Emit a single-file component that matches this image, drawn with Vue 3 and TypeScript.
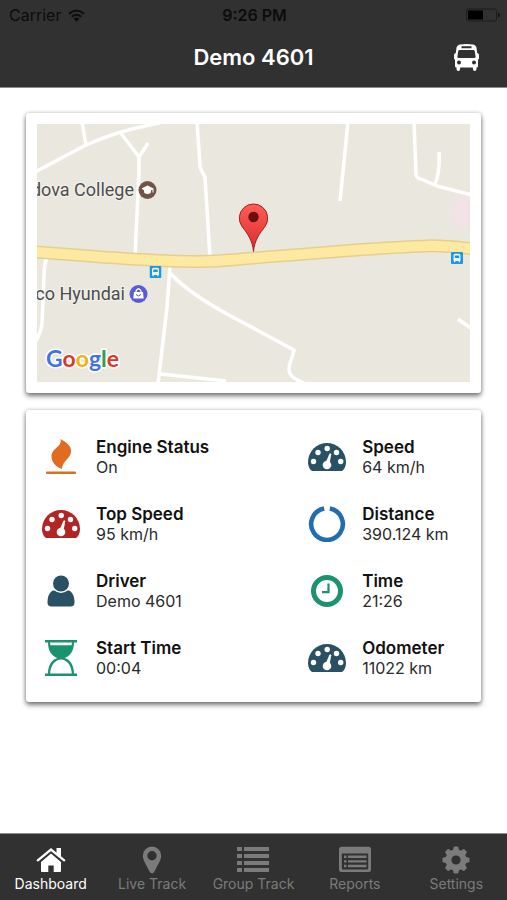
<script setup lang="ts">
interface Stat {
  label: string
  value: string
  icon: string
  tone: string
  width: number
  height: number
}

interface Tab {
  label: string
  icon: string
  href: string
  active: boolean
}

const stats: Stat[] = [
  { label: 'Engine Status', value: 'On', icon: 'flame', tone: 'orange', width: 30, height: 36 },
  { label: 'Speed', value: '64 km/h', icon: 'gauge', tone: 'slate', width: 38, height: 28 },
  { label: 'Top Speed', value: '95 km/h', icon: 'gauge', tone: 'red', width: 38, height: 28 },
  { label: 'Distance', value: '390.124 km', icon: 'ring', tone: 'blue', width: 38, height: 36 },
  { label: 'Driver', value: 'Demo 4601', icon: 'driver', tone: 'slate', width: 28, height: 32 },
  { label: 'Time', value: '21:26', icon: 'clock', tone: 'green', width: 32, height: 32 },
  { label: 'Start Time', value: '00:04', icon: 'hourglass', tone: 'green', width: 32, height: 36 },
  { label: 'Odometer', value: '11022 km', icon: 'gauge', tone: 'slate', width: 38, height: 28 },
]

const tabs: Tab[] = [
  { label: 'Dashboard', icon: 'home', href: '#dashboard', active: true },
  { label: 'Live Track', icon: 'place', href: '#live', active: false },
  { label: 'Group Track', icon: 'list', href: '#group', active: false },
  { label: 'Reports', icon: 'report', href: '#reports', active: false },
  { label: 'Settings', icon: 'gear', href: '#settings', active: false },
]

const teeth: number[] = [0, 45, 90, 135, 180, 225, 270, 315]
</script>

<template>
  <div class="screen">
    <svg class="sprite" aria-hidden="true">
      <symbol id="flame" viewBox="0 0 30 36">
        <path fill="currentColor" d="M14.500 0C20 3 25.800 7 25 13C24.300 20 16 22 16 30C9 27.500 5.500 22.500 5.500 17.500C5.500 9 16.500 8 14.500 0z" />
        <rect fill="currentColor" y="32.500" width="30" height="2.500" rx="1" />
      </symbol>
      <symbol id="gauge" viewBox="0 0 38 28">
        <path fill="currentColor" d="M4 28C1.500 26.500 0 22.500 0 19A19 19 0 0 1 38 19C38 22.500 36.500 26.500 34 28z" />
        <g fill="#fff">
          <circle cx="5.500" cy="18.500" r="2.700" />
          <circle cx="10" cy="9.500" r="2.700" />
          <circle cx="19.200" cy="5.500" r="2.700" />
          <circle cx="28.500" cy="9.500" r="2.700" />
          <circle cx="32.700" cy="18.500" r="2.700" />
          <circle cx="19" cy="22" r="4.300" />
          <path d="M17.500 20L21.300 11Q22.500 9.500 23.200 11.300L21.500 21z" />
        </g>
      </symbol>
      <symbol id="ring" viewBox="0 0 38 36">
        <path fill="none" stroke="currentColor" stroke-width="4.600" d="M21.800 2.600A15.800 15.800 0 1 1 16.200 2.600" />
      </symbol>
      <symbol id="driver" viewBox="0 0 28 32">
        <path fill="currentColor" d="M6 15.500H22C26 17.500 27.500 22 27.500 27.500Q27.500 31.500 23.500 31.500H4.500Q.5 31.500 .5 27.500C.5 22 2 17.500 6 15.500z" />
        <circle cx="14" cy="8.500" r="8.700" fill="currentColor" stroke="#fff" stroke-width="1.400" />
      </symbol>
      <symbol id="clock" viewBox="0 0 32 32">
        <circle cx="16" cy="16" r="13.500" fill="none" stroke="currentColor" stroke-width="5" />
        <path fill="none" stroke="currentColor" stroke-width="2.200" d="M17.500 8.500V17.200H11" />
      </symbol>
      <symbol id="hourglass" viewBox="0 0 32 36">
        <path fill="currentColor" d="M0 0H32V2.600H29C29 11 25 16.500 19.500 18C25 19.500 29 25 29 33.400H32V36H0V33.400H3C3 25 7 19.500 12.500 18C7 16.500 3 11 3 2.600H0z" />
        <path fill="#fff" d="M5 2.600H27L26.500 5.300H5.500zM5.200 33.400C5.500 25.500 10 19.800 16 19.500C22 19.800 26.500 25.500 26.800 33.400z" />
      </symbol>
      <symbol id="bus" viewBox="0 0 25 27">
        <path fill="currentColor" fill-rule="evenodd" d="M6 .6Q12.500-.5 19 .6Q22.500 1.200 22.700 5L23.200 9Q25 9.300 25 11V14.500Q25 15.500 24 15.500V22.500Q24 23.500 22.500 23.500V25Q22.500 27 20.700 27Q18.900 27 18.900 25V23.500H6.100V25Q6.100 27 4.300 27Q2.500 27 2.500 25V23.500Q1 23.500 1 22.500V15.500Q0 15.500 0 14.500V11Q0 9.300 1.800 9L2.300 5Q2.500 1.200 6 .6zM7.500 2.300V4.300H17.500V2.300zM5.500 6Q4.500 6 4.300 7L3.400 12.500Q3.300 14 4.700 14H20.300Q21.700 14 21.600 12.500L20.700 7Q20.500 6 19.500 6zM5 16.600A2 2 0 1 0 5 20.600A2 2 0 1 0 5 16.600zM20 16.600A2 2 0 1 0 20 20.600A2 2 0 1 0 20 16.600z" />
      </symbol>
      <symbol id="home" viewBox="0 0 32 28">
        <path fill="currentColor" d="M6 16L16 7.500L26 16V25Q26 26 25 26H18.700V19.500H13.300V26H7Q6 26 6 25z" />
        <path fill="none" stroke="currentColor" stroke-width="2.300" stroke-linecap="round" d="M2.800 14.300L16 3.500L29.200 14.300" />
        <path fill="currentColor" d="M21.500 2H26V11.300L21.500 7.500z" />
      </symbol>
      <symbol id="place" viewBox="0 0 32 28">
        <path fill="currentColor" fill-rule="evenodd" d="M16 .5A9.200 9.200 0 0 1 25.200 9.700C25.200 14 21 20 18.300 25.800Q16 29 13.700 25.800C11 20 6.800 14 6.800 9.700A9.200 9.200 0 0 1 16 .5zM16 5A4.700 4.700 0 1 0 16 14.400A4.700 4.700 0 1 0 16 5z" />
      </symbol>
      <symbol id="list" viewBox="0 0 32 28">
        <path fill="currentColor" d="M0 1H5V5H0zM7 1H32V5H7zM0 8H5V12H0zM7 8H32V12H7zM0 15H5V19H0zM7 15H32V19H7zM0 22H5V26H0zM7 22H32V26H7z" />
      </symbol>
      <symbol id="report" viewBox="0 0 32 28">
        <path fill="currentColor" fill-rule="evenodd" d="M2.500 .8H29.500Q32 .8 32 3.300V23.500Q32 26 29.500 26H2.500Q0 26 0 23.500V3.300Q0 .8 2.500 .8zM3.600 7.500Q2.800 7.500 2.800 8.300V22.600Q2.800 23.400 3.600 23.400H28.400Q29.200 23.400 29.200 22.600V8.300Q29.200 7.500 28.400 7.500z" />
        <path fill="currentColor" d="M5 9.600H7.500V12H5zM9 9.600H27.500V12H9zM5 14.200H7.500V16.600H5zM9 14.200H27.500V16.600H9zM5 18.800H7.500V21.200H5zM9 18.800H27.500V21.200H9z" />
      </symbol>
      <symbol id="gear" viewBox="0 0 32 28">
        <circle cx="16" cy="14" r="7.600" fill="none" stroke="currentColor" stroke-width="6" />
        <path v-for="angle in teeth" :key="angle" fill="currentColor" :transform="`rotate(${angle} 16 14)`" d="M12.800 5L13.700 .9Q13.800 .5 14.300 .5H17.700Q18.200 .5 18.300 .9L19.200 5z" />
      </symbol>
      <symbol id="stop" viewBox="0 0 12 12">
        <rect width="12" height="12" rx="1" fill="#1e96e0" />
        <path fill="#e9f6ff" fill-rule="evenodd" d="M4 1.800H8Q9.500 1.800 9.500 3.500V9H9V10.300H7.700V9H4.300V10.300H3V9H2.500V3.500Q2.500 1.800 4 1.800zM3.800 3.500V6H8.200V3.500z" />
      </symbol>
    </svg>

    <header class="top">
      <div class="status">
        <span class="carrier">
          Carrier
          <svg width="17" height="13" viewBox="0 0 17 13" aria-hidden="true">
            <g fill="none" stroke="currentColor" stroke-width="2">
              <path d="M1 4.800Q8.500-1.800 16 4.800" />
              <path d="M3.800 7.800Q8.500 3.700 13.200 7.800" />
            </g>
            <path fill="currentColor" d="M5.700 9.700Q8.500 7.500 11.300 9.700L8.500 12.700z" />
          </svg>
        </span>
        <span class="clock-text">9:26 PM</span>
        <svg class="battery" width="34" height="14" viewBox="0 0 34 14" aria-hidden="true">
          <rect x=".5" y="1" width="30" height="12" rx="2" fill="none" stroke="#1c1c1c" />
          <rect x="2" y="2.500" width="15" height="9" fill="#000" />
          <path d="M32 4.500Q34 5 34 7T32 9.500z" fill="#111" />
        </svg>
      </div>
      <div class="nav">
        <h1>Demo 4601</h1>
        <button type="button" class="vehicle" aria-label="Vehicles">
          <svg width="25" height="27"><use href="#bus" /></svg>
        </button>
      </div>
    </header>

    <main>
      <section class="card map-card">
        <svg class="map" viewBox="37 124 433 258" role="img" aria-label="Map">
          <defs>
            <linearGradient id="pin-fill" x1="0" y1="0" x2="0" y2="1">
              <stop offset="0" stop-color="#ff5d58" />
              <stop offset="1" stop-color="#dd2a2a" />
            </linearGradient>
            <radialGradient id="pink">
              <stop offset=".6" stop-color="#f3e2e6" />
              <stop offset="1" stop-color="#f3e2e6" stop-opacity="0" />
            </radialGradient>
          </defs>
          <rect x="37" y="124" width="433" height="258" fill="#eae8de" />
          <ellipse cx="464" cy="212" rx="16" ry="21" fill="url(#pink)" />
          <g class="road">
            <path d="M35 172L84 146Q112 133 145 126L172 120" />
            <path d="M82 122L86 145" />
            <path d="M120 132L139 157L148 143M139 156V172L135 257" />
            <path d="M197 122L200 165Q200 169 205 177L210 258" />
            <path d="M348 122L340 201" />
            <path d="M414 122L416 174Q417 179 421 179L437 186L472 195M439 152Q440 172 435 184" />
            <path d="M47 258Q44 264 44 275L42 324Q41 332 36 341" />
            <path d="M170 266L167 307L158 384M161 374L198 378L226 381" />
            <path d="M169 272C185 290 215 308 240 321L294 350Q293 355 290 363C287 374 291 378 304 383" />
            <path d="M458 319L472 329" />
          </g>
          <path class="highway-edge" d="M30 251.500C75 255 120 259 160 260.500C200 263 220 261 253 258C310 254 370 248 425 246Q440 245 475 249" />
          <path class="highway" d="M30 251.500C75 255 120 259 160 260.500C200 263 220 261 253 258C310 254 370 248 425 246Q440 245 475 249" />
          <use href="#stop" x="149.500" y="266" width="12" height="12" />
          <use href="#stop" x="451" y="252" width="12" height="12" />
          <g class="place-name">
            <text x="134" y="196" text-anchor="end">dova College</text>
            <text x="125" y="300" text-anchor="end">co Hyundai</text>
          </g>
          <circle cx="147.500" cy="190" r="9" fill="#755248" />
          <path fill="#fff" d="M141.500 188.500L147.500 185.500L153.500 188.500V192.500H152.500V189.500L151 190.200V192.500Q147.500 195.500 144 192.500V190.200z" />
          <circle cx="138.500" cy="294" r="9" fill="#5b5bd3" />
          <path fill="#fff" d="M134 292H143L143.700 298.500H133.300z" />
          <path fill="none" stroke="#fff" stroke-width="1.300" d="M136 293V291Q138.500 286.500 141 291V293" />
          <path fill="none" stroke="#5b5bd3" d="M136 294.500Q138.500 297.500 141 294.500" />
          <path fill="url(#pin-fill)" stroke="#9e2320" d="M253.500 251.500C252.500 240 247 233 242 226.500A14.200 14.200 0 1 1 265 226.500C260 233 254.500 240 253.500 251.500z" />
          <circle cx="253.500" cy="217" r="5.200" fill="#6b0f0c" />
          <text class="brand" x="46" y="367"><tspan fill="#4173e3">G</tspan><tspan fill="#d9382c">o</tspan><tspan fill="#f2b211">o</tspan><tspan fill="#4173e3">g</tspan><tspan fill="#2f9e4f">l</tspan><tspan fill="#d9382c">e</tspan></text>
        </svg>
      </section>

      <dl class="card stats">
        <div v-for="stat in stats" :key="stat.label" class="stat">
          <span class="stat-icon" :class="stat.tone">
            <svg :width="stat.width" :height="stat.height" aria-hidden="true"><use :href="`#${stat.icon}`" /></svg>
          </span>
          <dt>{{ stat.label }}</dt>
          <dd>{{ stat.value }}</dd>
        </div>
      </dl>
    </main>

    <nav class="tabs">
      <a v-for="tab in tabs" :key="tab.label" :href="tab.href" class="tab" :class="{ active: tab.active }">
        <svg width="32" height="28" aria-hidden="true"><use :href="`#${tab.icon}`" /></svg>
        <span>{{ tab.label }}</span>
      </a>
    </nav>
  </div>
</template>

<style>
body {
  margin: 0;
  background: #fff;
}
</style>

<style scoped>
.screen {
  display: flex;
  flex-direction: column;
  min-height: 100vh;
  font-family: Inter, "Liberation Sans", sans-serif;
  color: #111;
}

.sprite {
  position: absolute;
  width: 0;
  height: 0;
}

svg {
  display: block;
}

.top {
  box-sizing: border-box;
  height: 88px;
  background: #313131;
  border-bottom: 1px solid #8c8c8c;
}

.status {
  display: grid;
  grid-template-columns: 1fr auto 1fr;
  align-items: center;
  height: 30px;
  padding: 0 7px 0 9px;
  font-size: 16px;
  color: #0c0c0c;
}

.carrier {
  display: flex;
  align-items: center;
  gap: 7px;
}

.clock-text {
  font-weight: 600;
}

.battery {
  justify-self: end;
}

.nav {
  display: grid;
  grid-template-columns: 1fr auto 1fr;
  align-items: center;
  height: 54px;
  padding: 0 28px;
}

h1 {
  grid-column: 2;
  margin: 0;
  font-size: 22px;
  font-weight: 600;
  line-height: 28px;
  color: #fff;
}

.vehicle {
  justify-self: end;
  padding: 0;
  border: 0;
  background: none;
  color: #fff;
}

main {
  flex: 1;
  display: flex;
  flex-direction: column;
  gap: 17px;
  padding: 25px 26px;
}

.card {
  margin: 0;
  background: #fff;
  border-radius: 3px;
  box-shadow: 0 3px 5px rgba(0, 0, 0, 0.5), 0 0 4px rgba(0, 0, 0, 0.2);
}

.map-card {
  padding: 11px;
}

.map {
  width: 100%;
}

.road {
  fill: none;
  stroke: #fff;
  stroke-width: 3.5;
  stroke-linejoin: round;
}

.highway-edge,
.highway {
  fill: none;
  stroke: #e5cf8d;
  stroke-width: 13;
}

.highway {
  stroke: #fde9a2;
  stroke-width: 10;
}

.place-name {
  font: 18px Roboto, sans-serif;
  fill: #4c4c4c;
  stroke: #f3f2ec;
  stroke-width: 2;
  paint-order: stroke;
}

.brand {
  font: 700 23px Lato, sans-serif;
  stroke: #fff;
  stroke-width: 3;
  paint-order: stroke;
}

.stats {
  display: grid;
  grid-template-columns: 13fr 8fr;
  row-gap: 27px;
  padding: 27px 10px 24px 15px;
}

.stat {
  display: grid;
  grid-template-columns: 40px 1fr;
  grid-template-rows: 20px 20px;
  column-gap: 15px;
  white-space: nowrap;
}

.stat-icon {
  grid-row: 1 / 3;
  display: grid;
  place-items: center;
}

dt {
  font-size: 17px;
  font-weight: 600;
  line-height: 20px;
}

dd {
  margin: 0;
  font-size: 16px;
  line-height: 20px;
  color: #2a2a2a;
}

.orange {
  color: #df6c1f;
}

.slate {
  color: #2a5064;
}

.red {
  color: #b32424;
}

.blue {
  color: #226db0;
}

.green {
  color: #1b936c;
}

.tabs {
  box-sizing: border-box;
  display: grid;
  grid-template-columns: repeat(5, 1fr);
  height: 67px;
  padding-top: 12px;
  background: #313131;
  border-top: 1px solid #8c8c8c;
}

.tab {
  display: flex;
  flex-direction: column;
  align-items: center;
  gap: 1px;
  font-size: 14px;
  line-height: 18px;
  color: #7b7b7b;
  text-decoration: none;
}

.tab.active {
  color: #fff;
}
</style>
